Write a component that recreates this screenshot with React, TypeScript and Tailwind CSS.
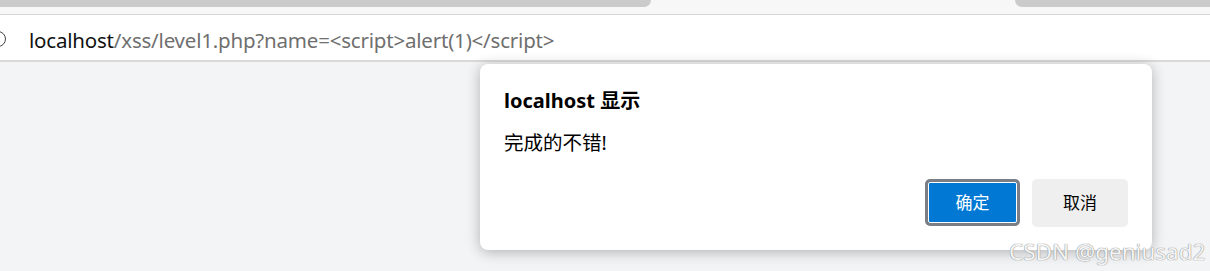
import React from 'react';

const ui = { fontFamily: '"Noto Sans", "Noto Sans CJK SC", sans-serif' };

export default function App() {
  return (
    <div className="relative w-[1210px] h-[271px] overflow-hidden bg-[#f3f4f6]" style={ui}>
      {/* tab strip */}
      <div className="flex h-[7px] bg-[#f7f7f7]">
        <div className="w-[651px] bg-[#cbcbcb] rounded-br-[8px]" />
        <div className="flex-1" />
        <div className="w-[195px] bg-[#cbcbcb] rounded-bl-[8px]" />
      </div>
      <div className="h-[8px] bg-[#f7f7f7] border-b border-[#d6d6d6]" />

      {/* address bar */}
      <div className="relative h-[47px] bg-white border-b-2 border-[#d9d9d9]">
        <div className="absolute left-[-10px] top-[16px] w-[16px] h-[16px] rounded-full border-[1.5px] border-[#444]" />
        <div className="absolute left-[29px] top-[11px] text-[20.5px] leading-[28px] tracking-[-0.2px] text-[#6f6f6f] whitespace-nowrap">
          <span className="text-[#111]">localhost</span>/xss/level1.php?name=&lt;script&gt;alert(1)&lt;/script&gt;
        </div>
      </div>

      {/* alert dialog */}
      <div className="absolute left-[480px] top-[64px] w-[672px] h-[186px] bg-white rounded-[8px] shadow-[0_2px_14px_rgba(0,0,0,0.28)] flex flex-col">
        <div className="pl-[24px] pt-[24px] text-[20px] font-bold text-black leading-[26px]">localhost 显示</div>
        <div className="pl-[24px] pt-[16px] text-[19.5px] text-black leading-[26px]">完成的不错!</div>
        <div className="flex justify-end gap-[12px] pr-[24px] mt-auto pb-[23px]">
          <button className="w-[95px] h-[47px] rounded-[5px] border-[3px] border-[#7b7e84] bg-[#0078d4] p-0">
            <span className="flex items-center justify-center w-full h-full rounded-[2px] border border-white text-white text-[17px]">确定</span>
          </button>
          <button className="w-[96px] h-[48px] rounded-[5px] bg-[#efefef] text-black text-[17px]">取消</button>
        </div>
      </div>

      {/* watermark */}
      <div className="absolute left-[1009px] top-[235px] text-[22.5px] text-[#f4f4f4] whitespace-nowrap" style={{ textShadow: '0 0 1px #8a8a8a, 0 0 1px #8a8a8a' }}>
        CSDN @geniusad2
      </div>
    </div>
  );
}
